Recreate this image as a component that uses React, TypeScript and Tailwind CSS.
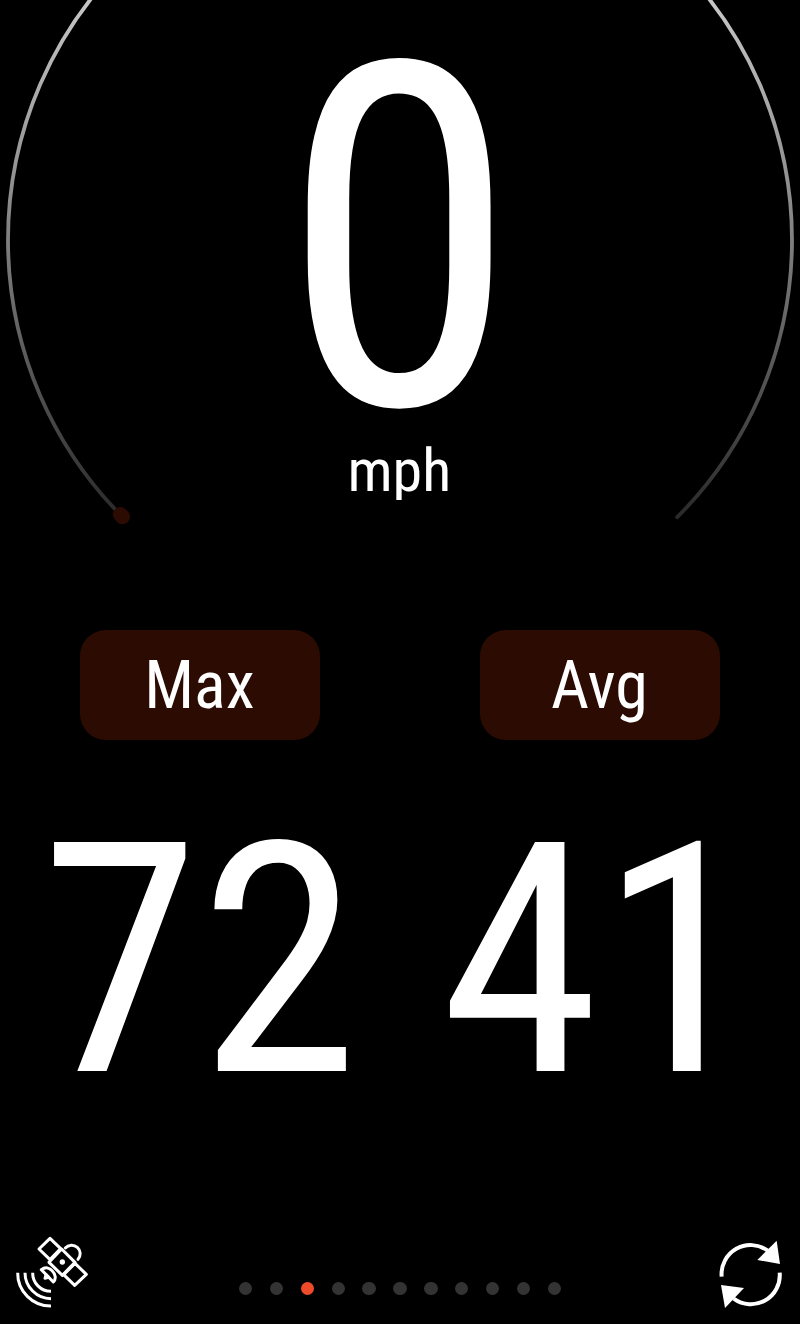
const stats = [
  { label: "Max", value: 72 },
  { label: "Avg", value: 41 },
];

const PAGE_COUNT = 11;
const ACTIVE_PAGE = 2;

const SpeedDial = () => (
  <svg className="absolute left-0 top-0" width="800" height="540" viewBox="0 0 800 540" fill="none">
    <defs>
      <linearGradient id="dial" gradientUnits="userSpaceOnUse" x1="0" y1="-152" x2="0" y2="517">
        <stop offset="0" stopColor="#ffffff" />
        <stop offset="0.22" stopColor="#c8c8c8" />
        <stop offset="0.6" stopColor="#7c7c7c" />
        <stop offset="1" stopColor="#2a2a2a" />
      </linearGradient>
    </defs>
    <path
      d="M122.8 517.2A392 392 0 1 1 677.2 517.2"
      stroke="url(#dial)"
      strokeWidth="3.8"
      strokeLinecap="round"
    />
    <path d="M120.3 514.5L122.5 516.7" stroke="#2c0b02" strokeWidth="15" strokeLinecap="round" />
  </svg>
);

const SatelliteIcon = () => (
  <svg
    width="110"
    height="100"
    viewBox="0 0 330 300"
    fill="none"
    stroke="white"
    strokeWidth="9"
    strokeLinecap="round"
    strokeLinejoin="round"
  >
    {/* panels and body */}
    <path d="M150 43L182 74L150 107L117 75Z" />
    <path d="M185 75L225 115L187 154L147 115Z" />
    <path d="M225 118L259 151L224 184L191 152Z" />
    <circle cx="187" cy="114" r="8" fill="white" stroke="none" />
    <path d="M196 72A25 25 0 0 1 234 106" />
    {/* dish */}
    <path d="M124 137C136 128 149 131 157 141C167 151 169 165 160 174Z" />
    <path d="M138 152L146 160L135 163Z" fill="white" />
    {/* signal */}
    <path strokeLinecap="butt" d="M53 146A99 99 0 0 0 153 246" />
    <path strokeLinecap="butt" d="M75 146A78 78 0 0 0 153 224" />
    <path strokeLinecap="butt" d="M98 146A55 55 0 0 0 153 202" />
  </svg>
);

const ResetIcon = () => (
  <svg width="100" height="100" viewBox="0 0 300 300" fill="none" stroke="white" strokeWidth="12">
    <path d="M65 158A87 87 0 0 1 203 80" />
    <path d="M239 146A87 87 0 0 1 101 224" />
    <path d="M230 50L240 120L172 108Z" fill="white" stroke="none" />
    <path d="M63 183L132 192L75 252Z" fill="white" stroke="none" />
  </svg>
);

const App = () => {
  return (
    <div className="relative flex h-[1324px] w-[800px] flex-col overflow-hidden bg-black font-['Roboto_Condensed',Roboto,sans-serif] text-white [font-stretch:75%]">
      <SpeedDial />

      <div className="flex h-[630px] flex-col items-center pr-[1.5px]">
        <div className="text-[480px] leading-[480px]">0</div>
        <div className="-mt-[39px] h-[59px] overflow-hidden text-[60px] leading-[60px]">mph</div>
      </div>

      <div className="grid grid-cols-2">
        {stats.map((stat) => (
          <div key={stat.label} className="flex flex-col items-center">
            <div className="flex h-[110px] w-60 items-center justify-center rounded-[26px] bg-[#2c0b02] pr-px pt-px text-[66px] leading-none">
              {stat.label}
            </div>
            <div className="mt-[61px] pr-px text-[322px] leading-[320px]">{stat.value}</div>
          </div>
        ))}
      </div>

      <div className="mt-auto grid grid-cols-[1fr_auto_1fr] items-end">
        <SatelliteIcon />
        <div className="mb-[29px] flex gap-[17.5px]">
          {Array.from({ length: PAGE_COUNT }, (_, i) => (
            <span
              key={i}
              className={`size-[13.4px] rounded-full ${i === ACTIVE_PAGE ? "bg-[#ee4b2b]" : "bg-[#333333]"}`}
            />
          ))}
        </div>
        <div className="justify-self-end">
          <ResetIcon />
        </div>
      </div>
    </div>
  );
};

export default App;
